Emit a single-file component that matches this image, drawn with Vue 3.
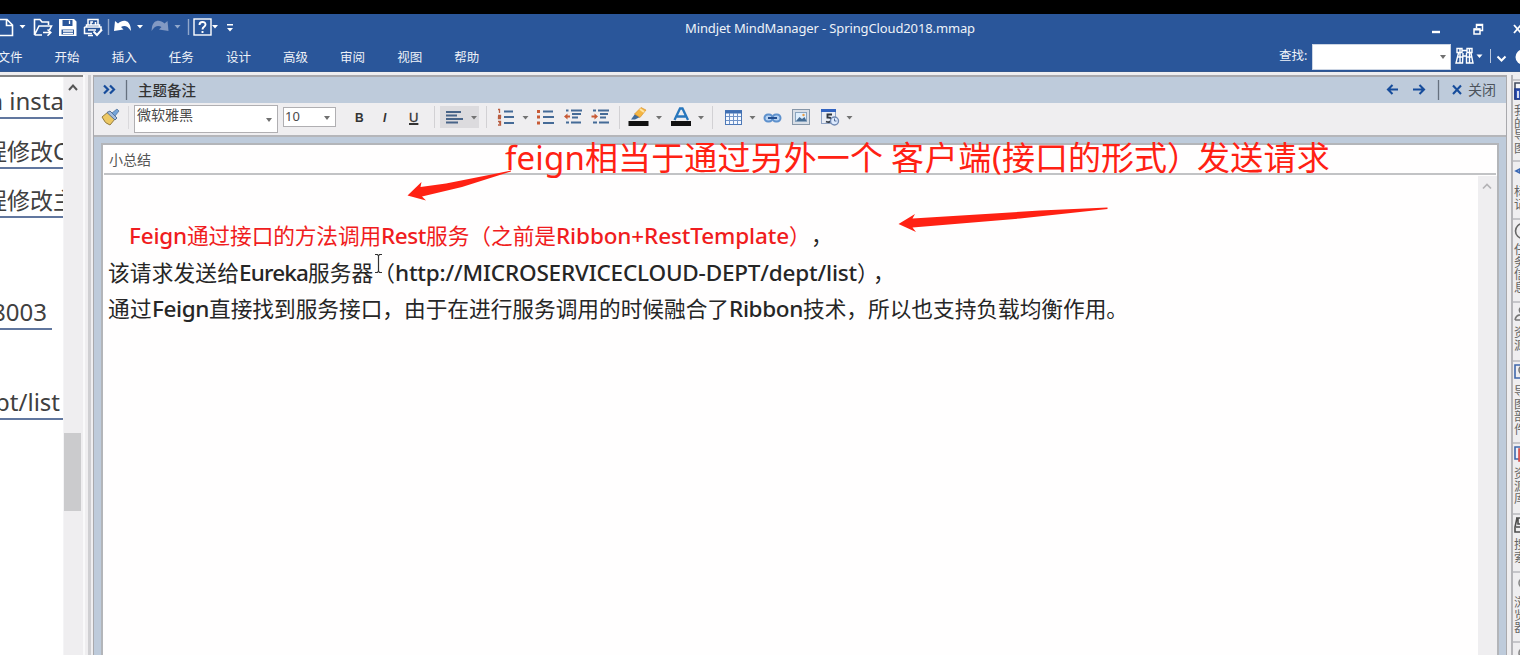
<script setup>
const menus = ['文件', '开始', '插入', '任务', '设计', '高级', '审阅', '视图', '帮助']

const lines = [
  [
    { t: 'Feign', w: 58, c: 'red latin' },
    { t: '通过接口的方法调用', w: 194, c: 'red' },
    { t: 'Rest', w: 45, c: 'red latin' },
    { t: '服务（之前是', w: 130, c: 'red' },
    { t: 'Ribbon+RestTemplate', w: 233, c: 'red latin' },
    { t: '）', w: 22, c: 'red' },
    { t: '，', w: 22 },
  ],
  [
    { t: '该请求发送给', w: 131 },
    { t: 'Eureka', w: 69, c: 'latin' },
    { t: '服务器（', w: 87 },
    { t: 'http://MICROSERVICECLOUD-DEPT/dept/list', w: 462, c: 'latin' },
    { t: '），', w: 43 },
  ],
  [
    { t: '通过', w: 44 },
    { t: 'Feign', w: 57, c: 'latin' },
    { t: '直接找到服务接口，', w: 195 },
    { t: '由于在进行服务调用的时候融合了', w: 325 },
    { t: 'Ribbon', w: 74, c: 'latin' },
    { t: '技术，所以也支持负载均衡作用。', w: 325 },
  ],
]

const note = [
  { t: 'feign', w: 80 },
  { t: '相当于通过另外一个', w: 298 },
  { t: ' ', w: 8 },
  { t: '客户端', w: 101 },
  { t: '(', w: 10 },
  { t: '接口的形式', w: 165 },
  { t: '）', w: 30 },
  { t: '发送请求', w: 133 },
]

const tabs = [
  { label: '我的导图', h: 81, icon: 'map' },
  { label: '标记', h: 58, icon: 'tag' },
  { label: '任务信息', h: 83, icon: 'clock' },
  { label: '资源', h: 59, icon: 'user' },
  { label: '导图部件', h: 82, icon: 'part' },
  { label: '资源库', h: 71, icon: 'lib' },
  { label: '搜索', h: 58, icon: 'search' },
  { label: '浏览器', h: 70, icon: 'globe' },
  { label: '', h: 60, icon: 'globe' },
]

// Spreads the glyphs of a run so that it fills the given width.
const vFit = {
  mounted(el, { value }) {
    const natural = el.getBoundingClientRect().width
    el.style.letterSpacing = `${(value - natural) / el.textContent.length}px`
  },
}
</script>

<template>
  <div class="screen">
    <div class="strip"></div>
    <header class="ribbon">
      <div class="titlebar">
        <svg class="quick" width="240" height="29" viewBox="0 14 240 29" fill="none">
          <g stroke="#fff" stroke-width="1.6">
            <path d="M0 19.500H7L12.500 25V35.500H0M6.500 19.500V25.500H12.500" />
            <path d="M34.500 35V19.500H40L42 22H48.500V25M34.500 35L39 26H51.500L49.500 30M34.500 35H42M43 32.500H50.500M47.500 29.500L50.800 32.500L47.500 35.800" />
          </g>
          <path fill="#fff" fill-rule="evenodd" d="M59 19H74L76.500 21.500V36H59ZM62.500 20V26H72.500V20ZM61.500 29.500V34.500H74V29.500Z" />
          <path stroke="#fff" stroke-width="1.3" d="M69.500 20.500V24M63 31H73M63 33.400H73" />
          <g stroke="#fff" stroke-width="1.5">
            <path d="M88 25V19.500H98V25M91 25V22H93M95.500 22V25M86.500 27V25H99.500V27M84.500 27H101V30M84.500 27V33.500H92M88 30H96M88 35.500H93" />
            <path stroke-width="2" d="M93.500 31.500L97 35L102 29.500" />
          </g>
          <path stroke="#91a8cc" d="M108.500 19V35M188.500 19V35" stroke-width="1.4" />
          <path fill="#fff" d="M114 31L115 21L118 23.500C123 19 129 20 130.500 27L131 31C127 24.500 123.500 25.500 121 27L123.500 29.500Z" />
          <path fill="#8299c3" d="M168.500 31L167.500 21L164.500 23.500C159.500 19 153.500 20 152 27L151.500 31C155.500 24.500 159 25.500 161.500 27L159 29.500Z" />
          <g fill="#fff">
            <path d="M19.500 25H25.500L22.500 28.500ZM137 25H143L140 28.500ZM212 25H218L215 28.500ZM227 28H233L230 31.500ZM227 24H233V25.500H227Z" />
            <path fill="#91a8cc" d="M174.500 25H180.500L177.500 28.500Z" />
          </g>
          <rect x="194" y="19" width="17" height="16" stroke="#fff" stroke-width="1.4" />
          <path d="M199.500 25C199.500 21 205.500 21 205.500 24.500C205.500 27 202.500 26.500 202.500 29.500M202.500 31V33" stroke="#fff" stroke-width="1.9" />
        </svg>
        <div class="doc-title"><span v-fit="290">Mindjet MindManager - SpringCloud2018.mmap</span></div>
        <svg class="window-controls" width="96" height="29" viewBox="1424 14 96 29" fill="none" stroke="#fff">
          <path d="M1432 32H1440" stroke-width="2.400" />
          <path d="M1474 29H1480V34H1474ZM1476.500 28V24.500H1482.500V30.500H1480.500" stroke-width="1.5" />
          <path d="M1474 29.500H1480M1476.500 25H1482.500" stroke-width="2" />
          <path d="M1514 25L1521 33M1514 33L1521 25" stroke-width="1.800" />
        </svg>
      </div>
      <div class="menubar">
        <nav><span v-for="m in menus" :key="m">{{ m }}</span></nav>
        <div class="find">
          <label>查找:</label>
          <div class="find-box"><i class="caret"></i></div>
          <svg width="69" height="28" viewBox="1451 43 69 28" fill="none" stroke="#fff">
            <path stroke-width="1.4" d="M1457 48.500H1462V52.500H1457ZM1467 48.500H1472V52.500H1467ZM1458.500 53L1456 63H1462.500L1463 53M1466.500 53V63H1473L1471 53M1462 50.500H1467M1463 56H1467M1458 57H1463M1467 57H1472M1460 49V63M1469.500 49V63" />
            <path d="M1490.500 49V63" stroke="#b8c7df" />
            <path d="M1497.500 56.500L1501.500 60.500L1505.500 56.500" stroke-width="2" />
            <path d="M1476.500 54.500H1482.500L1479.500 58Z" fill="#fff" stroke="none" />
            <circle cx="1523" cy="57" r="7.500" fill="#fff" stroke="none" />
          </svg>
        </div>
      </div>
    </header>

    <main class="workspace">
      <section class="map">
        <div class="topics">
          <p class="topic t1"><span>n insta</span></p>
          <p class="topic t2"><span>程修改C</span></p>
          <p class="topic t3"><span>程修改主</span></p>
          <p class="topic t4"><span>8003</span></p>
          <p class="topic t5"><span>pt/list</span></p>
        </div>
        <div class="map-scroll">
          <svg width="18" height="20" viewBox="0 0 18 20" fill="none"><path d="M5 13L9 8.500L13 13" stroke="#555" stroke-width="2" /></svg>
          <div class="thumb"></div>
        </div>
      </section>
      <div class="splitter"></div>

      <section class="panel">
        <div class="panel-head">
          <svg width="44" height="26" viewBox="94 77 44 26" fill="none">
            <path d="M104 85.500L108 89.500L104 93.500M110 85.500L114 89.500L110 93.500" stroke="#164c9b" stroke-width="2.200" />
            <path d="M126.500 80V100" stroke="#66717f" stroke-width="1.3" />
          </svg>
          <span class="panel-title">主题备注</span>
          <svg class="nav-icons" width="84" height="26" viewBox="1382 77 84 26" fill="none" stroke="#164c9b" stroke-width="2.100">
            <path d="M1398 89.500H1388M1392.500 85L1388 89.500L1392.500 94M1413 89.500H1424M1419.500 85L1424 89.500L1419.500 94" />
            <path d="M1438.500 80V100" stroke="#66717f" stroke-width="1.300" />
            <path d="M1453 85.500L1461 94M1453 94L1461 85.500" />
          </svg>
          <span class="close">关闭</span>
        </div>

        <div class="toolbar">
          <svg width="40" height="33" viewBox="94 103 40 33">
            <path d="M102 117L108 112L115 119L110 125Q105 124 102 117Z" fill="#edc863" stroke="#927b43" />
            <path d="M107 112.500L110 111L117 118L115 120Z" fill="#a5bddd" stroke="#567196" />
            <path d="M112 113L117 109L119 111L115 116Z" fill="#75a5da" stroke="#476b9a" stroke-width=".7" />
            <path d="M128.500 106V129" stroke="#dad9dc" />
          </svg>
          <div class="select family"><span>微软雅黑</span><i class="caret"></i></div>
          <div class="select size"><span>10</span><i class="caret"></i></div>
          <div class="format">
            <b>B</b><i>I</i><u>U</u>
          </div>
          <svg width="62" height="33" viewBox="434 103 62 33">
            <rect x="440" y="106" width="39" height="22" fill="#dcdbde" />
            <path d="M434.500 106V128M486.500 106V128" stroke="#d2d1d4" />
            <path d="M446 112H461M446 115.500H457M446 119H463M446 122.500H458" stroke="#486488" stroke-width="1.900" />
            <path d="M471 116H477L474 119.500Z" fill="#737373" />
          </svg>
          <svg width="124" height="33" viewBox="496 103 124 33" fill="none">
            <path d="M504 111.500H513M504 117H514M504 123H514M543 111.500H553M543 117H554M543 123H554M566 110.500H568.500M571 110.500H582M572 114H581M572 117.500H578M566 122.500H569M571 122.500H581M593 110.500H596M598 110.500H609M600 114H608M600 117.500H606M593 122.500H597M599 122.500H609" stroke="#456b97" stroke-width="2" />
            <path d="M498 109.500H499.500V113M498 115.500H500.500V117H498.500V118.500H501M498 121.500H500.500V125H498M499 123H500.500" stroke="#b95e41" stroke-width="1.300" />
            <path d="M537 110H540V113H537ZM537 115.500H540V118.500H537ZM537 121.500H540V124.500H537ZM564 116.500L567.500 113.500V115.500H570V117.500H567.500V119.500ZM598 116.500L594.500 113.500V115.500H591.500V117.500H594.500V119.500Z" fill="#c85a35" />
            <path d="M522.500 116H528.500L525.500 119.500Z" fill="#737373" />
            <path d="M619.500 106V129" stroke="#d2d1d4" />
          </svg>
          <svg width="95" height="33" viewBox="620 103 95 33">
            <rect x="628.500" y="121" width="20" height="5" fill="#111" />
            <path d="M631 119.500L635 114L640 117L635 119.500Z" fill="#416b9a" />
            <path d="M634.500 114L641 107.500L646 110L640 117.500Z" fill="#f4b643" stroke="#d68a20" stroke-width=".6" />
            <path d="M640 109L644 112" stroke="#ffe3a0" stroke-width="2" />
            <rect x="671" y="121" width="20" height="5" fill="#111" />
            <path d="M674.500 120L680 108.500H682.500L688 120M677 116.500H685.500" fill="none" stroke="#2877bd" stroke-width="2.300" />
            <path d="M656 116H662L659 119.500ZM698 116H704L701 119.500Z" fill="#737373" />
            <path d="M712.500 106V129" stroke="#d2d1d4" />
          </svg>
          <svg width="145" height="33" viewBox="715 103 145 33" fill="none">
            <rect x="725.500" y="110.500" width="16" height="14" fill="#f4f8ff" stroke="#4c78b7" />
            <path d="M725 112H742" stroke="#3f6fb3" stroke-width="3" />
            <path d="M729.500 113V124M733.500 113V124M737.500 113V124M726 116.500H741M726 120.500H741" stroke="#7093c7" />
            <path d="M749.500 116H755.500L752.500 119.500ZM846.500 116H852.500L849.500 119.500Z" fill="#737373" />
            <rect x="764.500" y="114.500" width="8" height="7" rx="3.500" fill="#b8d3f2" stroke="#5e91cd" stroke-width="2" />
            <rect x="772.500" y="114.500" width="8" height="7" rx="3.500" fill="#b8d3f2" stroke="#5e91cd" stroke-width="2" />
            <path d="M768 118H777" stroke="#244f91" stroke-width="2" />
            <rect x="792.500" y="109.500" width="17" height="15" fill="#d9dfe7" stroke="#8797a9" />
            <rect x="795.500" y="112.500" width="11" height="9" fill="#dfeffe" stroke="#8ba5bf" />
            <path d="M796 121L799.500 117L802 119L804.500 117L806.500 121Z" fill="#466d94" />
            <circle cx="803.500" cy="115" r="1.200" fill="#e99c45" />
            <rect x="821.500" y="109.500" width="14" height="14" fill="#e9edf5" stroke="#91a4c5" />
            <path d="M821 110.500H836" stroke="#3264c1" stroke-width="3" />
            <path d="M832 114.500H827.500V117.500Q832 117 831 121Q829 123 826 121.500" stroke="#303842" stroke-width="1.900" />
            <circle cx="834.500" cy="121" r="4" fill="#dceaff" stroke="#7189b2" stroke-width="1.400" />
            <path d="M834.500 118.500V121H836.500" stroke="#536b94" />
          </svg>
        </div>

        <div class="canvas">
          <div class="sheet">
            <div class="topic-name">小总结</div>
            <div class="editor">
              <div class="notes">
                <p v-for="(line, i) in lines" :key="i" :class="{ indent: i === 0 }">
                  <span v-for="(s, j) in line" :key="j" v-fit="s.w" :class="s.c">{{ s.t }}</span>
                </p>
              </div>
              <div class="notes-scroll">
                <svg width="18" height="20" viewBox="0 0 18 20" fill="none"><path d="M5 12.500L9 8.500L13 12.500" stroke="#b4b3b6" stroke-width="1.700" /></svg>
              </div>
            </div>
          </div>
        </div>
      </section>

      <aside class="tabs">
        <div v-for="(t, i) in tabs" :key="i" class="tab" :style="{ height: t.h + 'px' }">
          <svg width="16" height="20" viewBox="0 0 16 20" fill="none" stroke-width="1.600">
            <template v-if="t.icon === 'map'"><path d="M1 2H14V18H1Z" fill="#f3f4f8" stroke="#444d60" /><path d="M1 8H14V18H1Z" fill="#2f52b5" stroke="#213c90" /><path d="M4 10V17" stroke="#fff" /></template>
            <path v-else-if="t.icon === 'tag'" d="M8 6L2 9L8 12M5 9H10" stroke="#3b69b5" />
            <circle v-else-if="t.icon === 'clock'" cx="9" cy="11" r="7.500" stroke="#666" />
            <path v-else-if="t.icon === 'user'" d="M9 4Q4 5 6 9L9 12M1 17Q2 11 9 12M1 17H12" stroke="#777" />
            <template v-else-if="t.icon === 'part'"><path d="M1 3H13V16H1Z" stroke="#3f67aa" /><circle cx="9" cy="8" r="4" fill="#ddd" stroke="#777" /></template>
            <template v-else-if="t.icon === 'lib'"><path d="M1 3H8V15H1Z" fill="#edf0fa" stroke="#3f67aa" /><path d="M5 5H14V17H5Z" fill="#ee8b83" stroke="#d54d48" /></template>
            <path v-else-if="t.icon === 'search'" d="M2 3H8V17H1V12L3 3M4 3V9H10V12H2" stroke="#4d4d4d" />
            <circle v-else cx="10" cy="10" r="5" stroke="#888" />
          </svg>
          <span>{{ t.label }}</span>
        </div>
      </aside>
    </main>

    <div class="annotation"><span v-for="(s, i) in note" :key="i" v-fit="s.w">{{ s.t }}</span></div>
    <svg class="arrows" width="1520" height="655" viewBox="0 0 1520 655">
      <path fill="#ff2113" d="M407.500 195.500L421.500 182L420.500 187L446 183.500L499 173L511 170.500L511 171.500L462 187L422 196.500L426 200.500Z" />
      <path fill="#ff2113" d="M898.500 224L915 214L912.500 218.500L1040 210.500L1107.500 207.500V209L1020 218.500L912.500 227.500L916 232Z" />
      <path d="M375 254.500H377.500L378.500 256L379.500 254.500H382M378.500 256V271M375 272.500H377.500L378.500 271L379.500 272.500H382" fill="none" stroke="#333" stroke-width="1.200" />
    </svg>
  </div>
</template>

<style>
html, body { margin: 0; overflow: hidden; }
</style>

<style scoped>
.screen { position: relative; width: 1520px; height: 655px; overflow: hidden; display: flex; flex-direction: column; background: #efeef0; color: #222; font-family: "Noto Sans", "Noto Sans CJK SC", sans-serif; }
.screen * { box-sizing: border-box; }
svg { display: block; flex: none; }
.strip { height: 14px; background: #000; flex: none; }
.ribbon { height: 58px; flex: none; background: #2a569a; color: #fff; border-bottom: 1px solid #35588e; }
.titlebar { height: 29px; display: flex; }
.doc-title { width: 300px; margin-left: 445px; font-size: 13px; line-height: 29px; white-space: nowrap; color: #eef2f8; }
.window-controls { margin-left: auto; }
.menubar { height: 28px; display: flex; justify-content: space-between; }
nav { display: flex; margin-left: -2.500px; }
nav span { width: 57.100px; font-size: 12.500px; line-height: 30px; white-space: nowrap; color: #eef2f8; }
.find { display: flex; align-items: center; font-size: 12.500px; }
.find label { width: 33px; color: #eef2f8; white-space: nowrap; line-height: 26px; margin-top: -2px; }
.find-box { width: 139px; height: 26px; background: #fff; border: 1px solid #ccd5e3; display: flex; align-items: center; justify-content: flex-end; padding-right: 4px; }
.caret { width: 0; height: 0; border: 3px solid transparent; border-top: 4px solid #707070; border-bottom: 0; flex: none; }

.workspace { flex: 1; min-height: 0; display: flex; padding-top: 3px; }
.map { width: 83px; display: flex; border-top: 2px solid #858585; flex: none; }
.topics { width: 64px; background: #fff; overflow: hidden; border-right: 1px solid #f4f4f6; }
.topic { margin: 0; display: flex; justify-content: flex-end; align-items: flex-end; white-space: nowrap; font-size: 24px; line-height: 32px; color: #404040; border-bottom: 2px solid #61779f; }
.topic span { flex: none; }
.t1 { height: 42px; margin-right: -1px; }
.t2 { height: 50px; font-size: 23px; justify-content: flex-start; text-indent: -16px; }
.t3 { height: 49px; font-size: 23px; justify-content: flex-start; text-indent: -16px; }
.t4 { height: 112px; width: 52px; padding-right: 5px; }
.t5 { height: 90px; padding-right: 3px; }
.map-scroll { width: 19px; background: #efeef0; }
.thumb { width: 17px; height: 78px; margin-top: 336px; background: #cbcbcd; }
.splitter { width: 10px; flex: none; border-left: 2px solid #f9f9fa; background: linear-gradient(90deg, #efeef0 0 3px, #cfcfd2 3px 6px, #efeef0 6px); }
.panel { width: 1414px; flex: none; border: 1px solid #a9a9ad; border-top-width: 2px; border-bottom: 0; display: flex; flex-direction: column; background: #becbdb; }
.panel-head { height: 26px; flex: none; display: flex; align-items: center; background: #becbdb; }
.panel-title { font-size: 14.500px; line-height: 24px; font-weight: 500; color: #333; }
.nav-icons { margin-left: auto; }
.close { width: 40px; font-size: 14px; line-height: 24px; color: #4c535c; padding-left: 2px; }
.toolbar { height: 34px; flex: none; display: flex; background: #efeef0; border-bottom: 2px solid #b5b6ba; }
.select { display: flex; background: #fff; border: 1px solid #b0afb2; font-size: 14px; color: #4a4a4a; }
.select span { flex: 1; line-height: 18px; padding-left: 2px; }
.family { width: 144px; height: 28px; margin-top: 2px; padding-right: 5px; }
.family .caret { margin-top: 12px; }
.size { width: 53px; height: 20px; margin: 4px 0 0 5px; padding-right: 5px; font-size: 13px; }
.size span { padding-left: 1px; line-height: 17px; }
.size .caret { margin-top: 8px; }
.format { width: 98px; display: flex; align-items: center; font-family: "Liberation Sans", sans-serif; color: #333; padding: 0 0 3px 19px; height: 33px; }
.format::before { content: ""; width: 1px; height: 22px; background: #d2d1d4; margin-left: -12px; margin-right: 12px; }
.format b, .format i, .format u { width: 28px; font-weight: 700; font-size: 12px; line-height: 16px; flex: none; }
.format i { width: 26px; font-weight: 700; }
.format u { font-weight: 400; font-size: 13px; text-decoration-thickness: 2px; -webkit-text-stroke: .3px #333; }
.canvas { flex: 1; min-height: 0; padding: 6px 7px 0; display: flex; }
.sheet { flex: 1; border: 2px solid #b3b5b9; border-bottom: 0; background: #fffefe; display: flex; flex-direction: column; }
.topic-name { height: 30px; margin: 0 1px; border-bottom: 2px solid #c2c3c5; padding-left: 5px; font-size: 14px; line-height: 30px; color: #555; flex: none; }
.editor { flex: 1; min-height: 0; display: flex; }
.notes { flex: 1; padding: 43px 0 0 5px; }
.notes p { margin: 0; height: 36.500px; line-height: 36.500px; font-size: 21.700px; white-space: nowrap; color: #262626; display: flex; align-items: baseline; }
.notes p.indent { padding-left: 21px; }
.notes span { flex: none; }
.notes .latin { font-size: 22.500px; font-weight: 500; }
.notes .red { color: #f01c20; }
.notes-scroll { width: 19px; background: #efeef0; margin-top: 1px; }
.tabs { flex: 1; margin-left: 4px; padding-top: 4px; border-left: 2px solid #b4b4b8; overflow: hidden; }
.tab { border-top: 2px solid #c6c6ca; padding: 0 0 0 1px; overflow: hidden; display: flex; flex-direction: column; }
.tab span { margin-top: 4px; width: 13px; font-size: 12.500px; line-height: 12.700px; word-break: break-all; color: #666; }
.annotation { position: absolute; left: 505px; top: 133px; height: 50px; line-height: 50px; font-size: 33px; color: #ff2113; white-space: pre; display: flex; }
.annotation span { flex: none; }
.arrows { position: absolute; left: 0; top: 0; pointer-events: none; }
</style>
